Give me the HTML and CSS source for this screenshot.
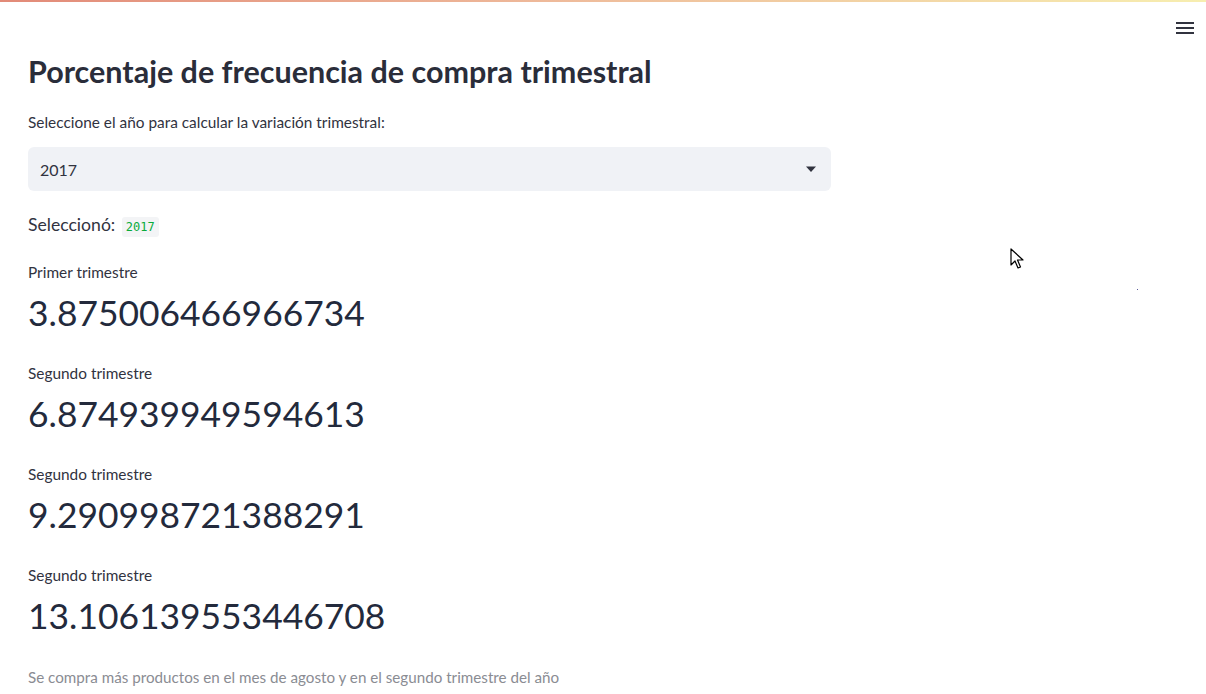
FILE: index.html
```html
<!DOCTYPE html>
<html lang="es">
<head>
<meta charset="utf-8">
<title>Porcentaje de frecuencia de compra trimestral</title>
<link rel="stylesheet" href="styles.css">
</head>
<body>
<div class="decoration"></div>
<header class="header">
  <button class="menu" aria-label="Menú">
    <svg width="18" height="14" viewBox="0 0 18 14"><rect x="0" y="1" width="18" height="2" fill="#31333f"/><rect x="0" y="6" width="18" height="2" fill="#31333f"/><rect x="0" y="11" width="18" height="2" fill="#31333f"/></svg>
  </button>
</header>
<main class="main">
  <h1 class="title">Porcentaje de frecuencia de compra trimestral</h1>
  <label class="widget-label">Seleccione el año para calcular la variación trimestral:</label>
  <div class="select">
    <span class="select-value">2017</span>
    <svg class="select-arrow" width="12" height="8" viewBox="0 0 12 8"><path d="M1 1.5 L11 1.5 L6 7 Z" fill="#31333f"/></svg>
  </div>
  <p class="selected">Seleccionó: <code class="code">2017</code></p>
  <div class="metric">
    <div class="metric-label">Primer trimestre</div>
    <div class="metric-value">3.875006466966734</div>
  </div>
  <div class="metric">
    <div class="metric-label">Segundo trimestre</div>
    <div class="metric-value">6.874939949594613</div>
  </div>
  <div class="metric">
    <div class="metric-label">Segundo trimestre</div>
    <div class="metric-value">9.290998721388291</div>
  </div>
  <div class="metric">
    <div class="metric-label">Segundo trimestre</div>
    <div class="metric-value">13.106139553446708</div>
  </div>
  <p class="caption">Se compra más productos en el mes de agosto y en el segundo trimestre del año</p>
</main>
<svg class="cursor" width="14" height="22" viewBox="0 0 14 22"><path d="M1 1 L1 17 L5 13 L8 20 L10.5 19 L7.5 12 L13 12 Z" fill="#fff" stroke="#000" stroke-width="1.2" stroke-linejoin="round"/></svg>
<span class="dot"></span>
</body>
</html>
```
FILE: styles.css
```css
html, body {
  margin: 0;
  padding: 0;
  background: #ffffff;
  height: 100%;
  overflow: hidden;
}
body {
  font-family: "Lato", "Noto Sans", sans-serif;
  color: #31333f;
  position: relative;
}
.decoration {
  height: 2px;
  background: linear-gradient(90deg, #e28a78 0%, #eeb99a 45%, #f7eeb0 100%);
}
.header {
  position: absolute;
  top: 2px;
  right: 0;
  left: 0;
  height: 44px;
}
.menu {
  position: absolute;
  top: 19px;
  right: 12px;
  border: 0;
  background: transparent;
  padding: 0;
  width: 18px;
  height: 14px;
  display: block;
}
.menu svg { display: block; }
.main {
  padding: 51px 28px 0 28px;
  width: 803px;
}
.title {
  margin: 0;
  font-size: 30.5px;
  line-height: 36px;
  font-weight: 700;
  color: #2a2d3a;
  white-space: nowrap;
}
.widget-label {
  display: block;
  margin-top: 23px;
  font-size: 15.4px;
  line-height: 20px;
  color: #31333f;
}
.select {
  margin-top: 15px;
  height: 44px;
  background: #f0f2f6;
  border-radius: 6px;
  display: flex;
  align-items: center;
  justify-content: space-between;
  padding: 0 14px 0 12px;
}
.select-value {
  font-size: 16px;
  color: #31333f;
}
.select-arrow { display: block; }
.selected {
  margin: 22px 0 0 0;
  font-size: 17.6px;
  line-height: 24px;
}
.code {
  font-family: "DejaVu Sans Mono", "Liberation Mono", monospace;
  font-size: 12px;
  color: #09ab3b;
  background: #f3f4f6;
  padding: 3px 4px;
  border-radius: 3px;
  margin-left: 2px;
}
.metric {
  margin-top: 28px;
}
.selected + .metric { margin-top: 23px; }
.metric-label {
  font-size: 15.4px;
  line-height: 20px;
  color: #31333f;
}
.metric-value {
  margin-top: 9px;
  font-size: 35.4px;
  line-height: 44px;
  color: #232a3c;
}
.caption {
  margin: 29px 0 0 0;
  font-size: 15.2px;
  line-height: 20px;
  color: #8a8c93;
  white-space: nowrap;
}
.cursor {
  position: absolute;
  left: 1010px;
  top: 248px;
}
.dot {
  position: absolute;
  left: 1137px;
  top: 289px;
  width: 1px;
  height: 1px;
  background: #5a5a9a;
}
```
